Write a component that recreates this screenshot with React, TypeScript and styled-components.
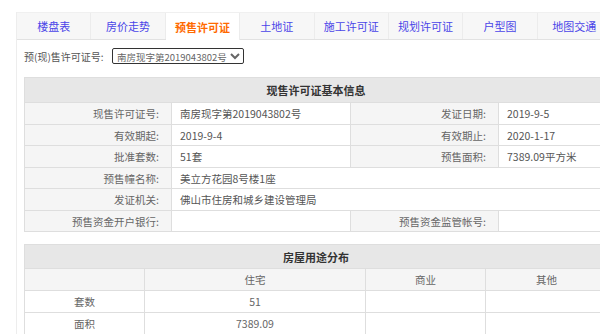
import styled, { createGlobalStyle } from "styled-components";

const GlobalStyle = createGlobalStyle`
  html, body {
    margin: 0;
    padding: 0;
    background: #ffffff;
    overflow: hidden;
  }
  body {
    font-family: "Noto Sans CJK SC", "Noto Sans", sans-serif;
    color: #555;
  }
`;

const Page = styled.div`
  padding: 12px 0 0 16px;
  width: 640px;
`;

const Panel = styled.div`
  border-left: 1px solid #ededed;
  min-height: 340px;
`;

const TabBar = styled.div`
  display: flex;
  width: 595px;
  height: 28px;
  background: #f7f7f7;
  border-top: 1px solid #f0f0f0;
  border-bottom: 1px solid #e2e2e2;
  box-sizing: border-box;
`;

const Tab = styled.div<{ $active?: boolean }>`
  flex: 1 1 0;
  display: flex;
  align-items: center;
  justify-content: center;
  font-size: 11px;
  white-space: nowrap;
  border-right: 1px solid #ececec;
  color: ${(p) => (p.$active ? "#ff6a00" : "#4a45e8")};
  font-weight: ${(p) => (p.$active ? 700 : 400)};
  background: ${(p) => (p.$active ? "#ffffff" : "transparent")};
  margin-bottom: ${(p) => (p.$active ? "-1px" : "0")};
  cursor: pointer;
`;

const Content = styled.div`
  padding: 0 0 0 7px;
`;

const FilterRow = styled.div`
  display: flex;
  align-items: center;
  height: 16px;
  margin-top: 8px;
  font-size: 10px;
  color: #555;
`;

const FilterLabel = styled.span`
  width: 88px;
  white-space: nowrap;
`;

const Select = styled.select`
  width: 132px;
  height: 16px;
  padding: 0;
  font-family: "Noto Sans CJK SC", "Noto Sans", sans-serif;
  font-size: 9.5px;
  color: #666;
  border: 1px solid #333;
  border-radius: 2px;
  background: #fff;
  outline: none;
`;

const Table = styled.table<{ $gap?: number }>`
  width: 583px;
  border-collapse: collapse;
  table-layout: fixed;
  margin-top: ${(p) => p.$gap ?? 0}px;
  font-size: 10.5px;
  td, th {
    border: 1px solid #dedede;
    padding: 0;
    white-space: nowrap;
    overflow: hidden;
  }
`;

const HeadCell = styled.th<{ $h?: number }>`
  height: ${(p) => p.$h ?? 23}px;
  background: #e7e7e7;
  color: #333;
  font-weight: 700;
  font-size: 11px;
  text-align: center;
`;

const Row = styled.tr<{ $h?: number }>`
  height: ${(p) => p.$h ?? 22}px;
`;

const Label = styled.td`
  background: #f5f5f5;
  color: #666;
  text-align: right;
  padding-right: 12px !important;
`;

const Value = styled.td`
  background: #fff;
  color: #555;
  padding-left: 8px !important;
`;

const Cell = styled.td<{ $shade?: boolean }>`
  background: ${(p) => (p.$shade ? "#f5f5f5" : "#ffffff")};
  color: #666;
  text-align: center;
`;

const tabs = ["楼盘表", "房价走势", "预售许可证", "土地证", "施工许可证", "规划许可证", "户型图", "地图交通"];

export default function App() {
  return (
    <>
      <GlobalStyle />
      <Page>
        <Panel>
          <TabBar>
            {tabs.map((t) => (
              <Tab key={t} $active={t === "预售许可证"}>
                {t}
              </Tab>
            ))}
          </TabBar>
          <Content>
            <FilterRow>
              <FilterLabel>预(现)售许可证号:</FilterLabel>
              <Select defaultValue="a">
                <option value="a">南房现字第2019043802号</option>
              </Select>
            </FilterRow>

            <Table $gap={13}>
              <colgroup>
                <col style={{ width: 147 }} />
                <col style={{ width: 179 }} />
                <col style={{ width: 148 }} />
                <col style={{ width: 109 }} />
              </colgroup>
              <thead>
                <tr>
                  <HeadCell colSpan={4} $h={24}>现售许可证基本信息</HeadCell>
                </tr>
              </thead>
              <tbody>
                <Row $h={22}>
                  <Label>现售许可证号:</Label>
                  <Value>南房现字第2019043802号</Value>
                  <Label>发证日期:</Label>
                  <Value>2019-9-5</Value>
                </Row>
                <Row $h={21}>
                  <Label>有效期起:</Label>
                  <Value>2019-9-4</Value>
                  <Label>有效期止:</Label>
                  <Value>2020-1-17</Value>
                </Row>
                <Row $h={22}>
                  <Label>批准套数:</Label>
                  <Value>51套</Value>
                  <Label>预售面积:</Label>
                  <Value>7389.09平方米</Value>
                </Row>
                <Row $h={21}>
                  <Label>预售幢名称:</Label>
                  <Value colSpan={3}>美立方花园8号楼1座</Value>
                </Row>
                <Row $h={22}>
                  <Label>发证机关:</Label>
                  <Value colSpan={3}>佛山市住房和城乡建设管理局</Value>
                </Row>
                <Row $h={21}>
                  <Label>预售资金开户银行:</Label>
                  <Value></Value>
                  <Label>预售资金监管帐号:</Label>
                  <Value></Value>
                </Row>
              </tbody>
            </Table>

            <Table $gap={12}>
              <colgroup>
                <col style={{ width: 120 }} />
                <col style={{ width: 221 }} />
                <col style={{ width: 120 }} />
                <col style={{ width: 122 }} />
              </colgroup>
              <thead>
                <tr>
                  <HeadCell colSpan={4} $h={23}>房屋用途分布</HeadCell>
                </tr>
              </thead>
              <tbody>
                <Row $h={22}>
                  <Cell $shade></Cell>
                  <Cell $shade>住宅</Cell>
                  <Cell $shade>商业</Cell>
                  <Cell $shade>其他</Cell>
                </Row>
                <Row $h={22}>
                  <Cell>套数</Cell>
                  <Cell>51</Cell>
                  <Cell></Cell>
                  <Cell></Cell>
                </Row>
                <Row $h={22}>
                  <Cell>面积</Cell>
                  <Cell>7389.09</Cell>
                  <Cell></Cell>
                  <Cell></Cell>
                </Row>
              </tbody>
            </Table>
          </Content>
        </Panel>
      </Page>
    </>
  );
}
